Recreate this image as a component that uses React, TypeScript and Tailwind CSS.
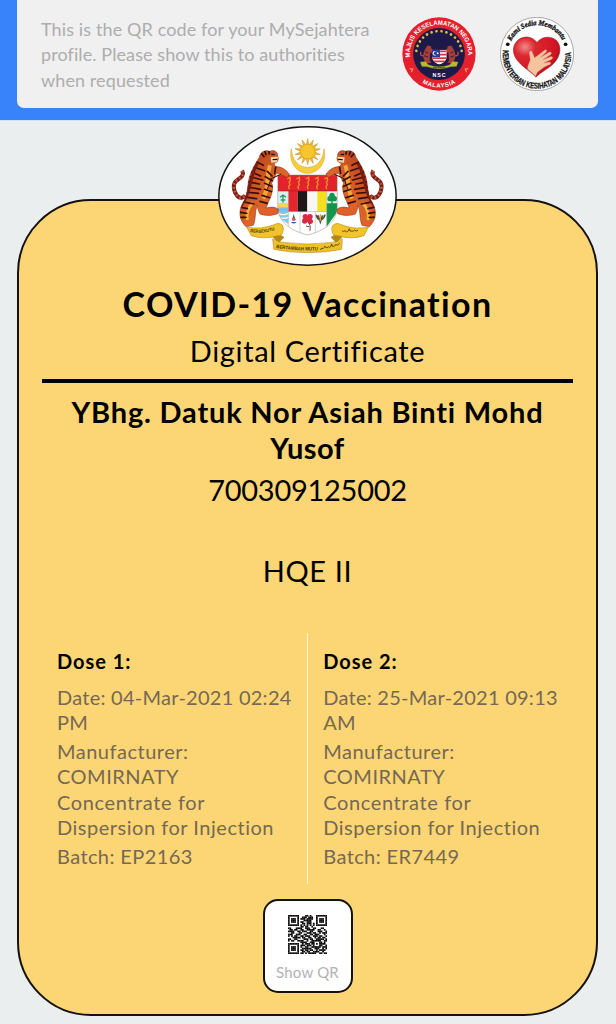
import React from 'react';

const QR_ROWS = [
  '1111111000011010001111111',
  '1000001001110111001000001',
  '1011101011101111001011101',
  '1011101000111110001011101',
  '1011101011001110001011101',
  '1000001001101110101000001',
  '1111111010101010101111111',
  '0000000011011001000000000',
  '1100011110011100110001100',
  '0110110011001111100110010',
  '1111001101110011000111001',
  '0011000110001110110010111',
  '1110011100110011011100010',
  '1010110011011100111011001',
  '0001111101100110010110110',
  '1100110000111011001111101',
  '1011001111001001111110011',
  '0000000011110011100011010',
  '1111111001011101101011110',
  '1000001011101110100011001',
  '1011101010011001111110111',
  '1011101001111110011100101',
  '1011101011011011001011110',
  '1000001001101100111100100',
  '1111111011010111110011011',
];

function QrCode() {
  return (
    <svg viewBox="0 0 25 25" className="size-[39px]">
      {QR_ROWS.map((row, y) =>
        row.split('').map((cell, x) =>
          cell === '1' ? <rect key={`${x}-${y}`} x={x - 0.05} y={y - 0.05} width="1.1" height="1.1" fill="#0a0a0a" /> : null,
        ),
      )}
    </svg>
  );
}

const TIGER_BODY =
  'M148 112C150 96 165 88 180 94C190 88 205 95 203 108C208 116 204 128 192 130L196 140C210 138 228 148 238 162L232 173C222 168 212 160 200 160L185 190C192 200 186 225 178 240L168 264C182 260 196 260 205 268L203 281C185 288 165 288 150 282C144 272 142 262 142 255C134 275 138 300 130 316L108 320C88 302 84 275 98 250C108 235 112 215 114 195C116 165 130 140 148 112Z';

function Tiger({ clip }: { clip: string }) {
  return (
    <g>
      <path d="M96 152C104 164 94 172 82 180C66 190 70 214 82 228C90 236 100 234 106 226" fill="none" stroke="#7a2018" strokeWidth="12" />
      <path d="M96 152C104 164 94 172 82 180C66 190 70 214 82 228C90 236 100 234 106 226" fill="none" stroke="#c0583d" strokeWidth="8" strokeDasharray="5 7" />
      <clipPath id={clip}>
        <path d={TIGER_BODY} />
      </clipPath>
      <path d={TIGER_BODY} fill="url(#fur)" stroke="#7a2a10" strokeWidth="1.5" />
      <g clipPath={`url(#${clip})`}>
        <path d="M180 136C168 170 178 200 160 236" stroke="#f6a53b" strokeWidth="12" fill="none" />
        <path d="M112 300C108 280 116 262 128 248" stroke="#f4b23c" strokeWidth="9" fill="none" />
        <path
          d="M132 122L160 136M128 140L164 152M120 154L152 168M112 168L158 180M108 184L148 192M106 200L152 208M104 216L146 220M98 230L140 236M92 244L132 252M84 260L112 266M84 276L110 280M88 292L108 292M172 154L186 168M166 170L190 184M164 190L188 200M164 208L188 216M156 226L182 234M150 244L172 250M198 136L194 160M150 96L162 110M162 88L168 104M176 90L178 102"
          stroke="#3a0f0b"
          strokeWidth="5"
          strokeLinecap="round"
        />
        <path d="M142 130C118 170 124 220 90 262" stroke="#7b1b10" strokeWidth="9" fill="none" />
        <path d="M182 112L204 110L200 126L184 128Z" fill="#f6d7ae" />
        <path d="M184 103L194 104M188 119L202 118" stroke="#220b08" strokeWidth="4" />
      </g>
      <path d="M172 208L184 176L214 162" stroke="#28130e" strokeWidth="3" fill="none" />
    </g>
  );
}

function CoatOfArms() {
  const rays = Array.from({ length: 14 }, (_, i) => (i * 360) / 14);
  return (
    <svg viewBox="24 18 537 420" className="relative z-10 mr-[2px] h-[140px] w-[179px]">
      <defs>
        <linearGradient id="fur" x1="0" y1="0" x2="1" y2="1">
          <stop offset="0" stopColor="#a8341a" />
          <stop offset=".55" stopColor="#dc6428" />
          <stop offset="1" stopColor="#e8582c" />
        </linearGradient>
        <clipPath id="shield">
          <path d="M203 165H382V262C380 305 345 332 293 345C240 332 205 305 203 262Z" />
        </clipPath>
        <path id="motto" d="M198 384Q293 399 388 384" />
        <path id="mottoLeft" d="M120 336Q158 344 200 328" />
      </defs>
      <ellipse cx="292.5" cy="228" rx="266" ry="207.5" fill="#fff" stroke="#151310" strokeWidth="4.5" />

      <path d="M244 86C234 128 262 160 293 160C324 160 352 128 342 86C340 122 318 142 293 142C268 142 246 122 244 86Z" fill="#f3cf3a" stroke="#c99d1b" strokeWidth="1.5" />
      {rays.map((a) => (
        <path key={a} d="M288 78L293 56L298 78Z" fill="#eebd2c" stroke="#c18d17" strokeWidth="1.5" transform={`rotate(${a} 293 95)`} />
      ))}
      <circle cx="293" cy="95" r="22" fill="#f6c62f" stroke="#d79a1c" strokeWidth="1.5" />

      <g clipPath="url(#shield)">
        <path fill="#fff" d="M203 165H382V345H203Z" />
        <path fill="#e3222c" d="M203 165H382V213H203Z" />
        <path fill="#d9eff5" d="M203 213H235V250H203Z" />
        <path fill="#f3d94b" d="M203 249H235V262H203Z" />
        <path fill="#77bfe2" d="M203 262H235V275H203Z" />
        <path d="M219 248V228M210 232L219 225L228 232M212 240H226" stroke="#2d9c57" strokeWidth="4" fill="none" />
        <path fill="#e6252c" d="M235 213H263V275H235Z" />
        <path fill="#1d181a" d="M263 213H292V275H263Z" />
        <path fill="#f7f7f5" d="M292 213H322V275H292Z" />
        <path fill="#f5df1f" d="M322 213H350V275H322Z" />
        <path fill="#e8f3ea" d="M350 213H382V252H350Z" />
        <path d="M366 255V235" stroke="#178444" strokeWidth="4" />
        <g fill="#16944b">
          <circle cx="360" cy="236" r="8" />
          <circle cx="373" cy="236" r="8" />
          <circle cx="366" cy="226" r="8" />
          <path d="M350 250H382V275L350 320Z" />
        </g>
        <path fill="#85c9e6" d="M203 275H235V312L203 290Z" />
        <path d="M203 280Q219 288 235 280M205 292Q220 298 235 292" stroke="#fff" strokeWidth="4" fill="none" />
        <path d="M243 306Q251 315 260 306ZM246 300L251 282L257 300Z" fill="#3c5fa5" />
        <circle cx="251" cy="298" r="5" fill="#d7535d" />
        <g fill="#d92b43">
          <circle cx="286" cy="290" r="8" />
          <circle cx="300" cy="290" r="8" />
          <circle cx="284" cy="303" r="8" />
          <circle cx="301" cy="304" r="8" />
          <circle cx="293" cy="297" r="9" />
        </g>
        <path d="M294 304Q304 316 300 332M288 318L298 320" stroke="#8b3a35" strokeWidth="3" fill="none" />
        <path d="M318 284Q322 298 331 300Q342 298 345 284M324 286L331 306L338 286" stroke="#5b5140" strokeWidth="5" fill="none" />
        <path d="M331 282V302" stroke="#d9ae36" strokeWidth="4" />
        <path d="M235 213V330M270 275V340M316 275V340M350 213V325M203 275H350" stroke="#9aa8af" strokeWidth="1.5" />
        <path d="M203 213H382" stroke="#8a211d" strokeWidth="1.5" />
      </g>
      {[237, 265, 293, 321, 349].map((x) => (
        <path key={x} d={`M${x - 6} 177L${x + 3} 172L${x + 4} 181L${x} 186L${x + 3} 193L${x - 1} 200L${x + 1} 208`} fill="none" stroke="#ea9028" strokeWidth="4" />
      ))}
      <path d="M203 165H382V262C380 305 345 332 293 345C240 332 205 305 203 262Z" fill="none" stroke="#9a8378" strokeWidth="1.5" />

      <Tiger clip="tigerLeft" />
      <g transform="translate(586 0) scale(-1 1)">
        <Tiger clip="tigerRight" />
      </g>

      <g stroke="#a77b15" strokeWidth="1.5">
        <path d="M188 350L206 342L222 352L206 368Z" fill="#b58918" />
        <path d="M397 350L379 342L363 352L379 368Z" fill="#b58918" />
        <path d="M109 320Q152 332 203 310Q225 312 219 334Q216 349 203 347Q160 360 124 347Z" fill="#f0c42a" />
        <path d="M476 320Q434 332 383 310Q361 312 366 334Q369 349 383 347Q426 360 462 347Z" fill="#f0c42a" />
        <path d="M188 356Q204 368 230 368Q293 376 356 368Q382 368 397 356L395 388Q350 398 293 398Q236 398 191 388Z" fill="#eec029" />
      </g>
      <g fill="#4f3b0a" className="font-['Liberation_Sans',sans-serif] font-bold">
        <text fontSize="14">
          <textPath href="#mottoLeft" textLength="76" lengthAdjust="spacingAndGlyphs">
            BERSEKUTU
          </textPath>
        </text>
        <text fontSize="15">
          <textPath href="#motto" textLength="126" lengthAdjust="spacingAndGlyphs">
            BERTAMBAH MUTU
          </textPath>
        </text>
      </g>
      <g fill="none" stroke="#4f3b0a" strokeWidth="2.5">
        <path d="M330 388q4 2 6 -4q3 5 6 -1q3 -9 5 -1q5 4 8 -2q3 5 7 0l3 -8q1 10 6 7q5 -1 6 -6q4 5 8 1l4 -5" />
        <path d="M396 332q5 5 9 0q4 7 10 1l3 -7q1 11 8 7q4 2 8 -3q4 6 10 1" />
      </g>
    </svg>
  );
}

function NscLogo() {
  const stars = Array.from({ length: 14 }, (_, i) => -82 + (i * 164) / 13);
  return (
    <svg viewBox="36 37 220 220" className="size-[74px]">
      <defs>
        <path id="nscTop" d="M60 157A86.6 86.6 0 1 1 232 157" />
        <path id="nscBottom" d="M62 200A99 99 0 0 0 230 200" />
      </defs>
      <circle cx="146" cy="147" r="109" fill="#e4202c" />
      <circle cx="146" cy="147" r="77" fill="#1d1a4a" />
      {stars.map((a) => (
        <circle key={a} cx="146" cy="79" r="4" fill="#dcc04a" transform={`rotate(${a} 146 147)`} />
      ))}
      <g fill="#a83f37">
        <path d="M112 122L122 124L124 132L134 138L130 146L120 142L118 166L124 172L106 176L102 164C96 154 100 136 112 122Z" />
        <path d="M182 122L172 124L170 132L160 138L164 146L174 142L176 166L170 172L188 176L192 164C198 154 194 136 182 122Z" />
      </g>
      <path d="M102 152Q88 154 92 140M192 152Q206 154 202 140" stroke="#b94c42" strokeWidth="4" fill="none" />
      <path d="M104 140L114 144M102 152L114 156M190 140L180 144M192 152L180 156" stroke="#4d1a33" strokeWidth="3" />
      <clipPath id="nscShield">
        <path d="M125 134H169V158Q164 174 147 178Q130 174 125 158Z" />
      </clipPath>
      <g clipPath="url(#nscShield)">
        <path fill="#fff" d="M120 130H172V182H120Z" />
        <path d="M124 139H172M124 149H172M124 159H172M124 169H172" stroke="#d83540" strokeWidth="5" />
        <path fill="#263d91" d="M120 130H149V156H120Z" />
        <circle cx="134" cy="145" r="7" fill="#f2e9b5" />
        <circle cx="137" cy="145" r="6" fill="#263d91" />
        <circle cx="142" cy="145" r="3" fill="#f2e9b5" />
      </g>
      <path d="M90 171L106 169L114 179Q146 191 178 179L186 169L203 171L198 184L181 185Q146 197 111 185L95 184Z" fill="#b7bb32" stroke="#6e721f" />
      <path d="M128 187H165" stroke="#4c5420" strokeWidth="3" strokeDasharray="4 1" />
      <path d="M59 191l9 1l-4 9M233 191l-9 1l4 9" stroke="#efb36a" strokeWidth="3" fill="none" />
      <g fill="#fff" className="font-['Liberation_Sans',sans-serif] font-bold">
        <text x="146" y="214" fontSize="16" textAnchor="middle" textLength="39">
          NSC
        </text>
        <text fontSize="19">
          <textPath href="#nscTop" textLength="286" lengthAdjust="spacingAndGlyphs">
            MAJLIS KESELAMATAN NEGARA
          </textPath>
        </text>
        <text fontSize="18">
          <textPath href="#nscBottom" startOffset="50%" textAnchor="middle" textLength="104">
            MALAYSIA
          </textPath>
        </text>
      </g>
    </svg>
  );
}

function HealthLogo() {
  return (
    <svg viewBox="31 37 220 220" className="size-[74px]">
      <defs>
        <path id="mohTop" d="M64 109A86 86 0 0 1 218 109" />
        <path id="mohBottom" d="M40 134A102 102 0 1 0 242 134" />
        <radialGradient id="heart" cx=".25" cy=".25" r=".9">
          <stop offset="0" stopColor="#ef8a86" />
          <stop offset=".25" stopColor="#dd2730" />
          <stop offset=".75" stopColor="#cf1421" />
          <stop offset="1" stopColor="#7b0d13" />
        </radialGradient>
      </defs>
      <circle cx="141" cy="147" r="109" fill="#fff" stroke="#666" strokeWidth="1.6" />
      <path
        d="M141 113C128 94 101 91 84 106C65 123 68 149 84 168C99 187 123 199 138 216C151 201 178 190 195 170C211 151 215 124 199 107C181 91 153 95 141 113Z"
        fill="url(#heart)"
        stroke="#8e1018"
        strokeWidth="1.5"
      />
      <path
        d="M114 193C111 180 119 174 121 164L118 145C118 137 124 135 127 141L134 158L163 136C169 132 173 138 168 142L152 157L176 142C183 138 187 145 181 149L159 164L181 155C188 153 190 160 184 163L161 174L177 171C183 171 184 177 178 179C160 185 154 194 142 201L137 213Q126 201 114 193Z"
        fill="#f4c3a0"
        stroke="#c98468"
        strokeWidth="1"
      />
      <circle cx="54" cy="118" r="5.5" fill="#111" />
      <circle cx="226" cy="118" r="5.5" fill="#111" />
      <g fill="#111" stroke="#111">
        <text fontSize="22" strokeWidth="1" className="font-['Liberation_Serif',serif] font-bold italic">
          <textPath href="#mohTop" textLength="188" lengthAdjust="spacingAndGlyphs">
            Kami Sedia Membantu
          </textPath>
        </text>
        <text fontSize="25" strokeWidth=".7" className="font-['Liberation_Sans',sans-serif] font-bold">
          <textPath href="#mohBottom" startOffset="1" textLength="340" lengthAdjust="spacingAndGlyphs">
            KEMENTERIAN KESIHATAN MALAYSIA
          </textPath>
        </text>
      </g>
    </svg>
  );
}

type DoseProps = { title: string; date: string; meridiem: string; batch: string };

function Dose({ title, date, meridiem, batch }: DoseProps) {
  return (
    <section className="flex flex-1 flex-col pt-[16px] pl-[15px] text-[20px] leading-[25.4px] text-[#766852]">
      <h2 className="font-bold tracking-[0.95px] text-black">{title}</h2>
      <div className="mt-[10.5px]">
        <p className="tracking-[0.26px]">{date}</p>
        <p className="tracking-[0.2px]">{meridiem}</p>
      </div>
      <div className="mt-[3px]">
        <p className="tracking-[0.5px]">Manufacturer:</p>
        <p className="tracking-[0.5px]">COMIRNATY</p>
        <p className="tracking-[0.62px]">Concentrate for</p>
        <p className="tracking-[0.52px]">Dispersion for Injection</p>
      </div>
      <p className="mt-[3.5px] tracking-[0.4px]">{batch}</p>
    </section>
  );
}

export default function App() {
  return (
    <div className="flex h-[1024px] w-full flex-col overflow-hidden bg-[#eaeeef] font-['Lato',sans-serif] whitespace-nowrap text-black">
      <header className="h-[120px] shrink-0 bg-[#3983fa] pr-[18px] pl-[17px]">
        <div className="flex h-[108px] rounded-b-[7px] bg-[#f0f0f0] pl-[24px]">
          <div className="w-[361px] pt-[17px] text-[18px] leading-[25.3px] text-[#adadad]">
            <p className="tracking-[0.12px]">This is the QR code for your MySejahtera</p>
            <p className="tracking-[0.09px]">profile. Please show this to authorities</p>
            <p className="tracking-[0.1px]">when requested</p>
          </div>
          <div className="flex gap-[24px] pt-[17px]">
            <NscLogo />
            <HealthLogo />
          </div>
        </div>
      </header>

      <main className="flex flex-col items-center border-t border-[#d5e3f5] pt-[5px]">
        <CoatOfArms />
        <article className="-mt-[67px] mr-px flex h-[817px] w-[581px] flex-col items-center rounded-[74px] border-2 border-[#15120c] bg-[#fcd675] px-[23px] pt-[83px]">
          <h1 className="text-[34px] leading-[40px] font-bold tracking-[1.35px]">COVID-19 Vaccination</h1>
          <p className="mt-[9px] text-[29px] leading-[36px] tracking-[0.66px]">Digital Certificate</p>
          <hr className="mt-[9.5px] h-[4.5px] w-full border-0 bg-black" />
          <p className="mt-[10.5px] text-[29px] leading-[36px] font-bold tracking-[0.8px]">YBhg. Datuk Nor Asiah Binti Mohd</p>
          <p className="text-[29px] leading-[36px] font-bold tracking-[0.45px]">Yusof</p>
          <p className="mt-[6px] text-[29px] leading-[36px] tracking-[-0.27px]">700309125002</p>
          <p className="mt-[45px] text-[29px] leading-[36px] tracking-[0.6px]">HQE II</p>

          <div className="mt-[44.5px] flex h-[251px] w-full">
            <Dose title="Dose 1:" date="Date: 04-Mar-2021 02:24" meridiem="PM" batch="Batch: EP2163" />
            <div className="w-[1.5px] bg-[#fff6df]" />
            <Dose title="Dose 2:" date="Date: 25-Mar-2021 09:13" meridiem="AM" batch="Batch: ER7449" />
          </div>

          <button className="mt-[15px] flex h-[94px] w-[90px] flex-col items-center rounded-[15px] border-2 border-[#15120c] bg-white pt-[14px]">
            <QrCode />
            <span className="mt-[9px] text-[15px] leading-[18px] tracking-[0.2px] text-[#b3b3b3]">Show QR</span>
          </button>
        </article>
      </main>
    </div>
  );
}
